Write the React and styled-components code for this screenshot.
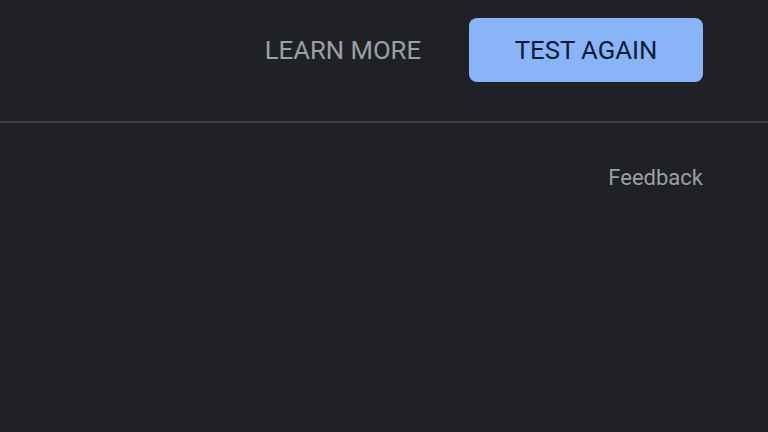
import styled, { createGlobalStyle } from "styled-components";

const GlobalStyle = createGlobalStyle`
  html, body {
    margin: 0;
    padding: 0;
    background: #202124;
  }
  body {
    font-family: Roboto, "Liberation Sans", sans-serif;
  }
`;

const Page = styled.div`
  width: 768px;
  height: 432px;
  background: #202124;
  overflow: hidden;
`;

const Toolbar = styled.div`
  height: 123px;
  display: flex;
  align-items: flex-start;
  justify-content: flex-end;
  gap: 48px;
  padding: 18px 65px 0 0;
  box-sizing: border-box;
  border-bottom: 2px solid #3c3d41;
`;

const TextButton = styled.button`
  height: 64px;
  padding: 0;
  border: none;
  background: none;
  color: #9aa0a6;
  font-family: inherit;
  font-size: 25.7px;
  cursor: pointer;
`;

const FilledButton = styled(TextButton)`
  width: 234px;
  border-radius: 8px;
  background: #8ab4f8;
  color: #0d1b36;
`;

const Footer = styled.div`
  display: flex;
  justify-content: flex-end;
  padding: 42px 65px 0 0;
`;

const FeedbackLink = styled.a`
  color: #9aa0a6;
  font-size: 22px;
  text-decoration: none;
  cursor: pointer;
`;

export default function App() {
  return (
    <Page>
      <GlobalStyle />
      <Toolbar>
        <TextButton>LEARN MORE</TextButton>
        <FilledButton>TEST AGAIN</FilledButton>
      </Toolbar>
      <Footer>
        <FeedbackLink>Feedback</FeedbackLink>
      </Footer>
    </Page>
  );
}
